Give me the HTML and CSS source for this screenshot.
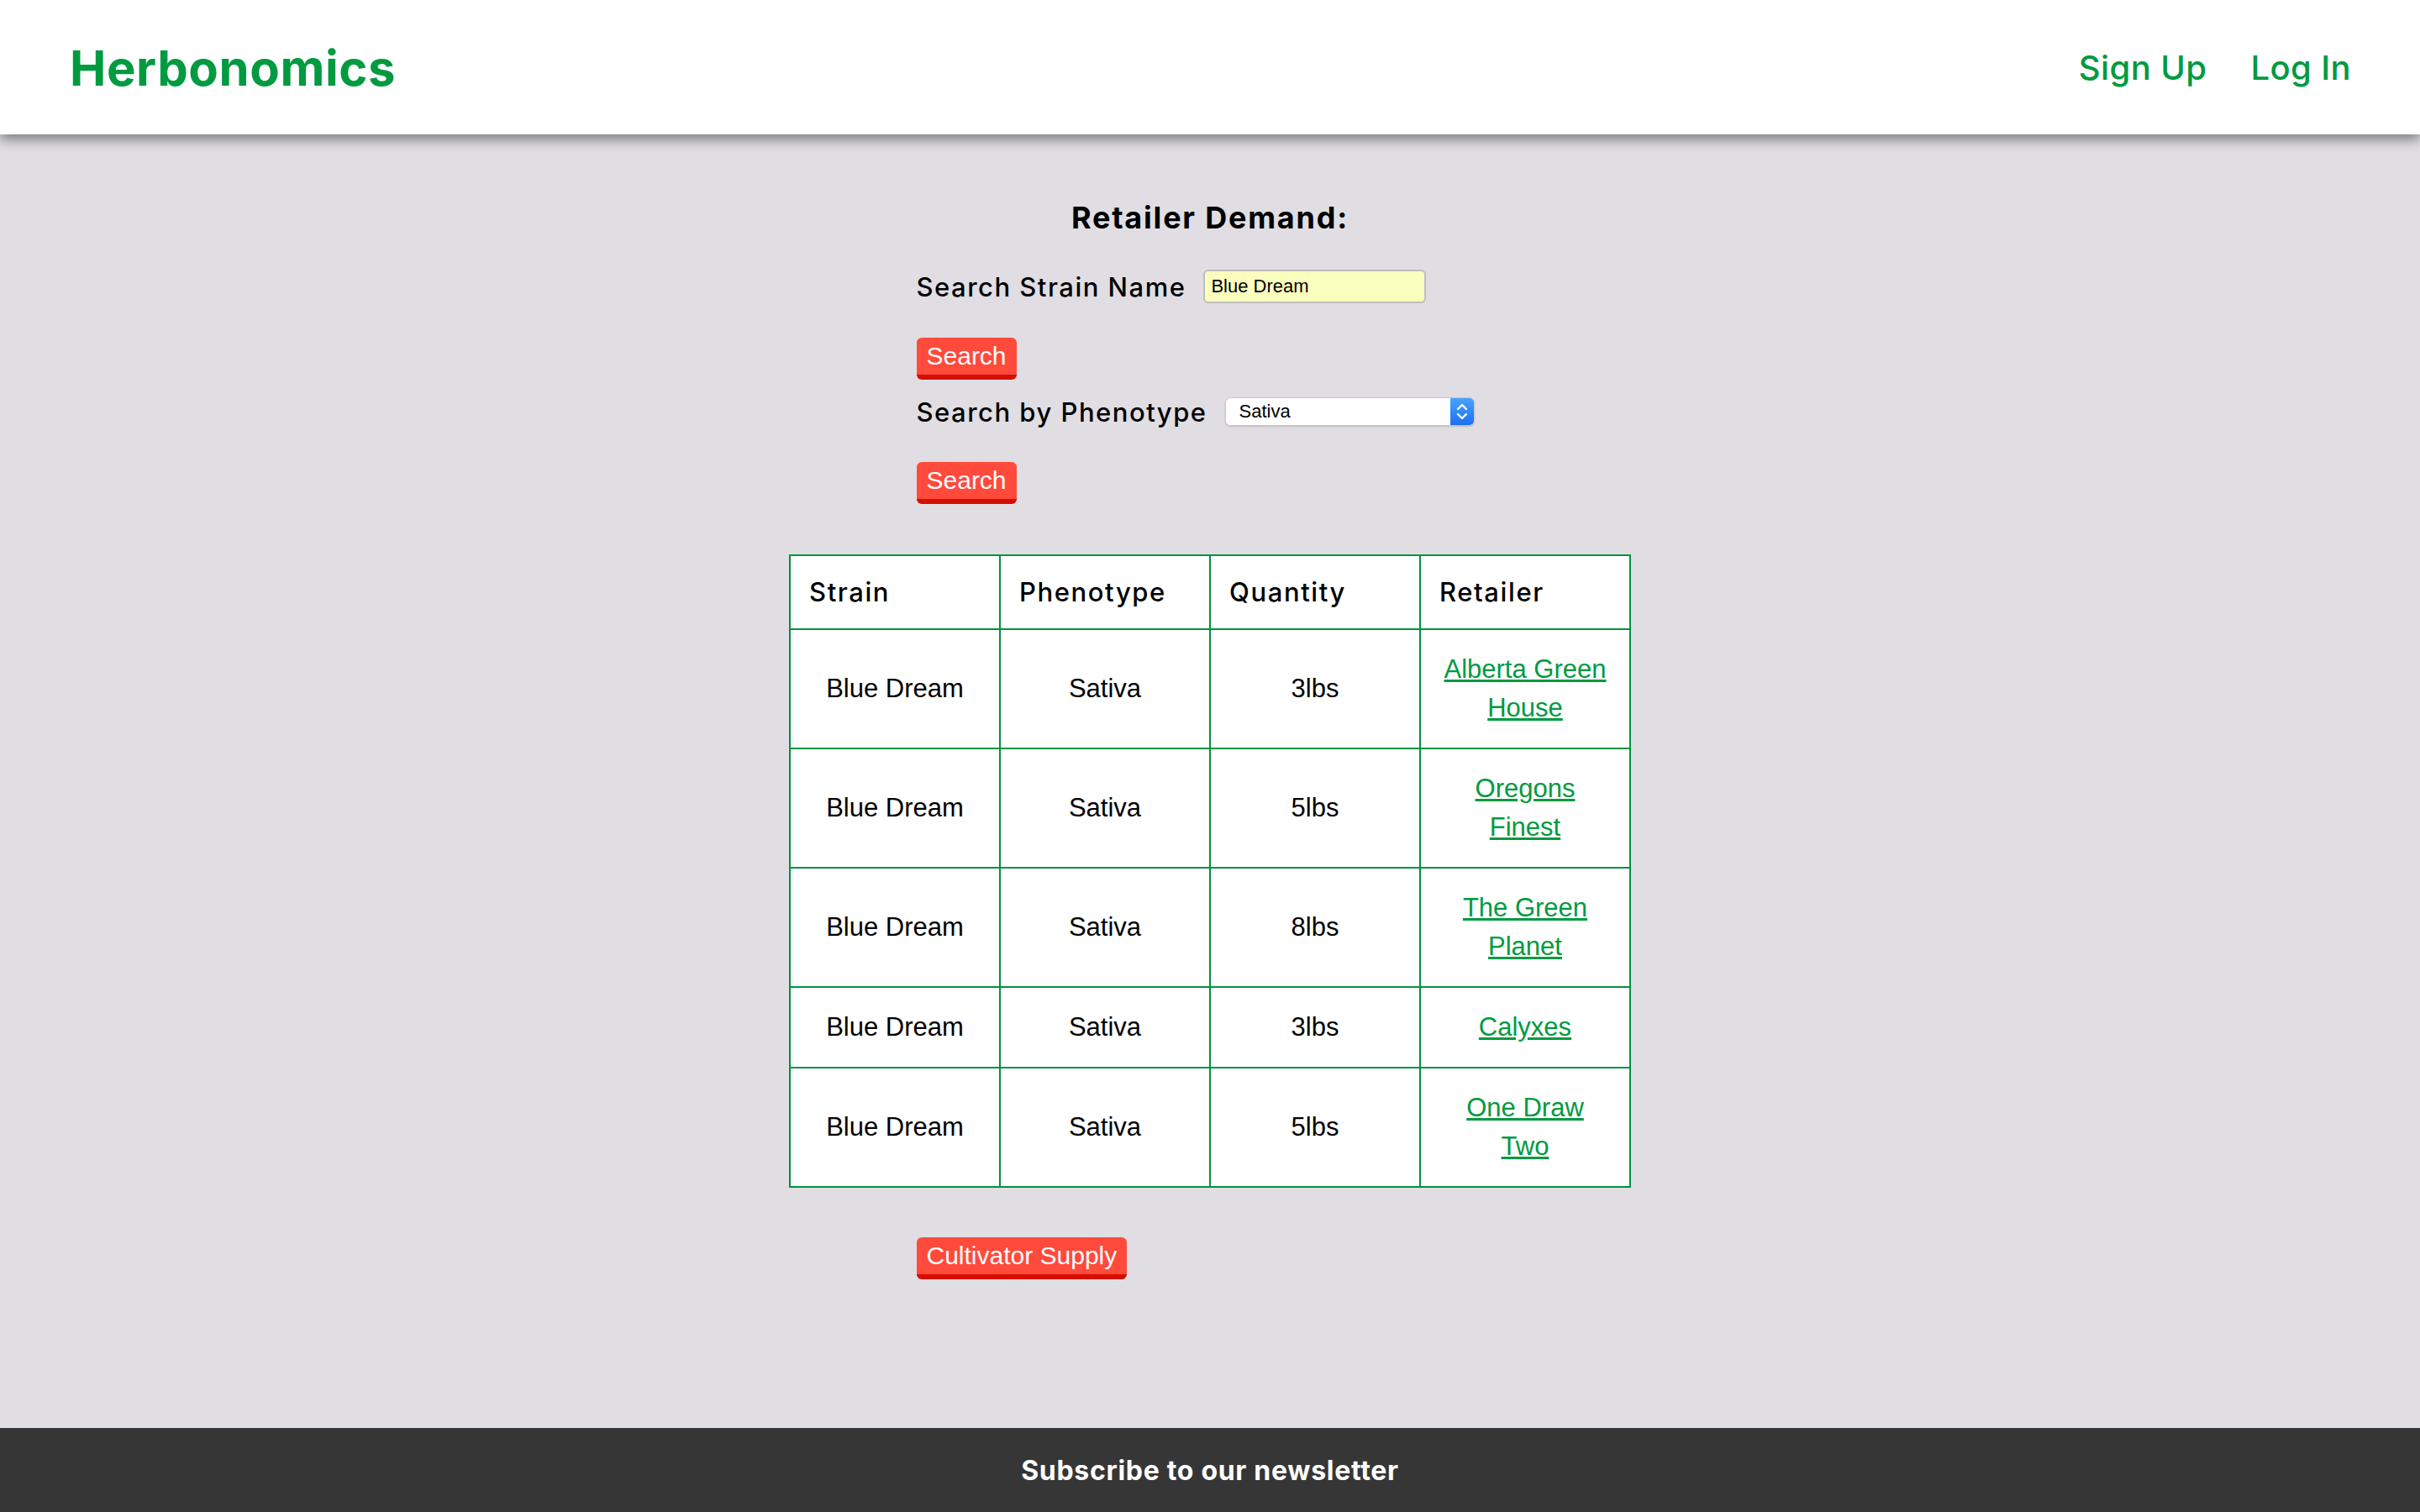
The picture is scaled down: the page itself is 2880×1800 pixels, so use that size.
FILE: index.html
```html
<!DOCTYPE html>
<html lang="en">
<head>
<meta charset="utf-8">
<title>Herbonomics</title>
<link rel="stylesheet" href="styles.css">
</head>
<body>
<header class="topbar">
  <a class="brand" href="#">Herbonomics</a>
  <nav class="nav">
    <a href="#">Sign Up</a>
    <a href="#">Log In</a>
  </nav>
</header>

<main class="main">
  <h3 class="title">Retailer Demand:</h3>

  <div class="form">
    <div class="row">
      <label class="label">Search Strain Name</label>
      <div class="input">Blue Dream</div>
    </div>
    <button class="btn btn-first">Search</button>
    <div class="row row-select">
      <label class="label">Search by Phenotype</label>
      <div class="select">
        <span class="select-text">Sativa</span>
        <span class="select-arrows">
          <svg width="20" height="30" viewBox="0 0 20 30"><path d="M5 12 L10 7 L15 12" fill="none" stroke="#fff" stroke-width="2.4" stroke-linecap="round" stroke-linejoin="round"/><path d="M5 18 L10 23 L15 18" fill="none" stroke="#fff" stroke-width="2.4" stroke-linecap="round" stroke-linejoin="round"/></svg>
        </span>
      </div>
    </div>
    <button class="btn btn-second">Search</button>
  </div>

  <table class="grid">
    <thead>
      <tr><th>Strain</th><th>Phenotype</th><th>Quantity</th><th>Retailer</th></tr>
    </thead>
    <tbody>
      <tr><td>Blue Dream</td><td>Sativa</td><td>3lbs</td><td><a href="#">Alberta Green House</a></td></tr>
      <tr><td>Blue Dream</td><td>Sativa</td><td>5lbs</td><td><a href="#">Oregons Finest</a></td></tr>
      <tr><td>Blue Dream</td><td>Sativa</td><td>8lbs</td><td><a href="#">The Green Planet</a></td></tr>
      <tr><td>Blue Dream</td><td>Sativa</td><td>3lbs</td><td><a href="#">Calyxes</a></td></tr>
      <tr><td>Blue Dream</td><td>Sativa</td><td>5lbs</td><td><a href="#">One Draw Two</a></td></tr>
    </tbody>
  </table>

  <div class="form form-bottom">
    <button class="btn">Cultivator Supply</button>
  </div>
</main>

<footer class="footer">
  <p class="footer-text">Subscribe to our newsletter</p>
</footer>
</body>
</html>
```

FILE: styles.css
```css
* { box-sizing: border-box; }

html, body { margin: 0; padding: 0; }

body {
  min-height: 100vh;
  display: flex;
  flex-direction: column;
  background: #e0dee3;
  font-family: "Inter", "Liberation Sans", sans-serif;
  color: #000;
}

.topbar {
  height: 160px;
  background: #fff;
  display: flex;
  align-items: center;
  justify-content: space-between;
  padding: 0 82px 0 83px;
  box-shadow: 0 6px 14px rgba(0, 0, 0, 0.45);
  position: relative;
  z-index: 2;
}

.brand {
  font-family: "Inter", sans-serif;
  font-weight: 700;
  font-size: 58px;
  color: #009a40;
  text-decoration: none;
  letter-spacing: 0.6px;
  margin-top: 2px;
}

.nav {
  display: flex;
  gap: 52px;
}

.nav a {
  font-family: "Inter", sans-serif;
  font-weight: 500;
  font-size: 40px;
  color: #009a40;
  text-decoration: none;
  letter-spacing: 0.4px;
}

.main {
  flex: 1;
  display: flex;
  flex-direction: column;
  align-items: center;
  padding-top: 77px;
}

.title {
  margin: 0;
  font-family: "Inter", sans-serif;
  font-weight: 700;
  font-size: 36px;
  line-height: 44px;
  letter-spacing: 1.8px;
}

.form {
  width: 700px;
  margin-left: 1px;
  display: flex;
  flex-direction: column;
  align-items: flex-start;
  margin-top: 40px;
}

.row {
  display: flex;
  align-items: center;
  height: 40px;
}

.row-select {
  margin-top: 18px;
}

.label {
  font-family: "Inter", sans-serif;
  font-weight: 500;
  font-size: 31px;
  letter-spacing: 1.5px;
  margin-right: 21px;
}

.input {
  width: 265px;
  height: 40px;
  background: #fbffbe;
  border: 2px solid #bdbdbd;
  border-radius: 6px;
  font-family: "Liberation Sans", sans-serif;
  font-size: 22px;
  line-height: 36px;
  padding: 0 7px;
}

.select {
  width: 297px;
  height: 34px;
  background: #fff;
  border: 1px solid #c6c6c6;
  border-radius: 6px;
  display: flex;
  align-items: center;
  justify-content: space-between;
  overflow: hidden;
  box-shadow: 0 1px 2px rgba(0,0,0,0.15);
}

.select-text {
  font-family: "Liberation Sans", sans-serif;
  font-size: 22px;
  padding-left: 16px;
}

.select-arrows {
  width: 28px;
  height: 100%;
  background: linear-gradient(#4aa3fb, #1c6ff3);
  display: flex;
  align-items: center;
  justify-content: center;
}

.btn {
  font-family: "Liberation Sans", sans-serif;
  font-size: 30px;
  color: #fff;
  background: #ff4a3c;
  border: none;
  border-bottom: 6px solid #d40f00;
  border-radius: 6px;
  height: 50px;
  padding: 0 12px;
  line-height: 44px;
  cursor: pointer;
}

.btn-first { margin-top: 41px; }
.btn-second { margin-top: 40px; }

.grid {
  margin-top: 60px;
  width: 1002px;
  table-layout: fixed;
  border-collapse: collapse;
  background: #fff;
}

.grid th, .grid td {
  border: 2px solid #00923f;
  padding: 24px 22px;
}

.grid th {
  font-family: "Inter", sans-serif;
  font-weight: 500;
  font-size: 31px;
  line-height: 38px;
  letter-spacing: 1.6px;
  text-align: left;
}

.grid td {
  font-family: "Liberation Sans", sans-serif;
  font-size: 31px;
  line-height: 46px;
  text-align: center;
}

.grid a {
  color: #009a40;
  text-decoration: underline;
}

.form-bottom {
  margin-top: 59px;
}

.footer {
  height: 100px;
  background: #363636;
  display: flex;
  align-items: center;
  justify-content: center;
}

.footer-text {
  margin: 0;
  font-family: "Inter", sans-serif;
  font-weight: 700;
  font-size: 32px;
  letter-spacing: 0.7px;
  color: #fff;
}
```
